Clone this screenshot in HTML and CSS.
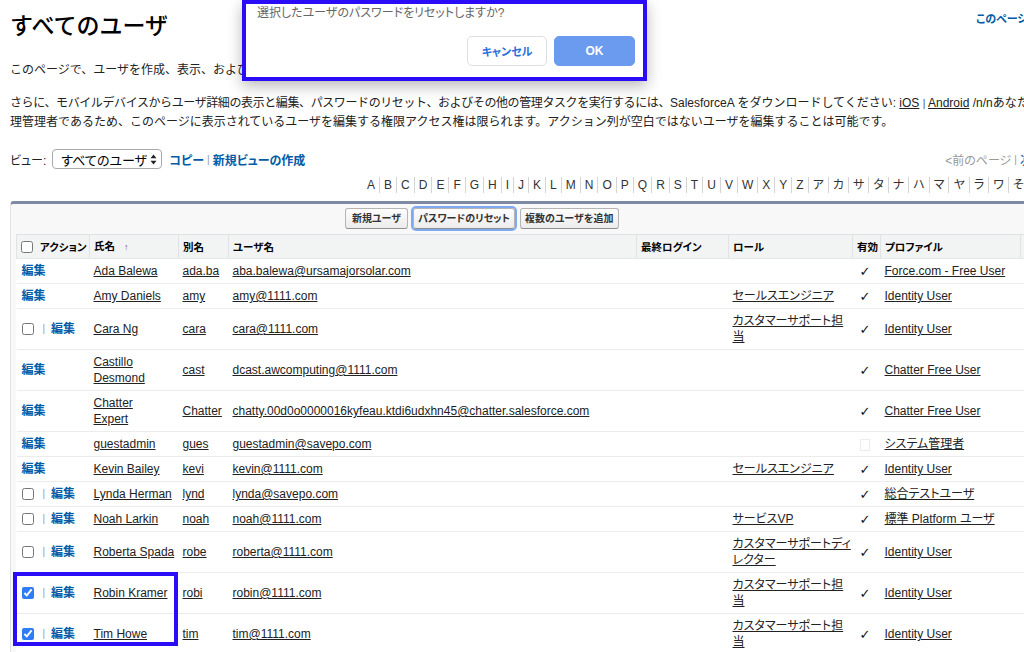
FILE: index.html
```html
<!DOCTYPE html>
<html lang="ja">
<head>
<meta charset="utf-8">
<title>すべてのユーザ</title>
<link rel="stylesheet" href="styles.css">
</head>
<body>
<div class="page">
  <div class="title-row">
    <h1 class="title">すべてのユーザ</h1>
    <a class="help" href="#">このページのヘルプ<span class="help-icon">?</span></a>
  </div>
  <p class="intro">このページで、ユーザを作成、表示、および管理できます。</p>
  <p class="desc"><span class="tight">さらに、モバイルデバイスからユーザ詳細の表示と編集、パスワードのリセット、およびその他の管理タスクを実行するには、</span>SalesforceA をダウンロードしてください: <a class="plain" href="#">iOS</a> <span class="bar dark">|</span> <a class="plain" href="#">Android</a> /n/nあなたは代<br>理管理者であるため、このページに表示されているユーザを編集する権限アクセス権は限られます。アクション列が空白ではないユーザを編集することは可能です。</p>

  <div class="view-row">
    <span class="view-label">ビュー:</span>
    <span class="select">すべてのユーザ<svg class="arrows" width="7" height="11" viewBox="0 0 7 11"><path d="M3.5 0.5 L6.5 4.2 L0.5 4.2 Z M3.5 10.5 L6.5 6.8 L0.5 6.8 Z" fill="#222"/></svg></span>
    <a class="action-link" href="#">コピー</a><span class="bar">|</span><a class="action-link" href="#">新規ビューの作成</a>
    <span class="pager"><span class="disabled">&lt;前のページ</span><span class="bar">|</span><a class="next" href="#">次のページ&gt;</a></span>
  </div>

  <ul class="alpha">
    <li>A</li><li>B</li><li>C</li><li>D</li><li>E</li><li>F</li><li>G</li><li>H</li><li>I</li><li>J</li><li>K</li><li>L</li><li>M</li><li>N</li><li>O</li><li>P</li><li>Q</li><li>R</li><li>S</li><li>T</li><li>U</li><li>V</li><li>W</li><li>X</li><li>Y</li><li>Z</li><li>ア</li><li>カ</li><li>サ</li><li>タ</li><li>ナ</li><li>ハ</li><li>マ</li><li>ヤ</li><li>ラ</li><li>ワ</li><li>その他</li><li>すべて</li>
  </ul>

  <div class="list-box">
    <div class="btn-row">
      <button class="btn">新規ユーザ</button>
      <button class="btn focused">パスワードのリセット</button>
      <button class="btn">複数のユーザを追加</button>
    </div>
    <table class="users">
      <colgroup>
        <col class="c-act"><col class="c-name"><col class="c-alias"><col class="c-user"><col class="c-login"><col class="c-role"><col class="c-active"><col class="c-prof"><col class="c-extra">
      </colgroup>
      <thead>
        <tr>
          <th class="act"><span class="act-wrap"><input type="checkbox" class="cb hcb">アクション</span></th>
          <th>氏名<span class="sort">↑</span></th>
          <th>別名</th>
          <th>ユーザ名</th>
          <th>最終ログイン</th>
          <th>ロール</th>
          <th>有効</th>
          <th>プロファイル</th>
          <th></th>
        </tr>
      </thead>
      <tbody>
        <tr>
          <td class="act"><a class="edit" href="#">編集</a></td>
          <td><a href="#">Ada Balewa</a></td><td><a href="#">ada.ba</a></td><td><a href="#">aba.balewa@ursamajorsolar.com</a></td><td></td><td></td>
          <td class="active"><span class="chk">✓</span></td><td><a href="#">Force.com - Free User</a></td><td></td>
        </tr>
        <tr>
          <td class="act"><a class="edit" href="#">編集</a></td>
          <td><a href="#">Amy Daniels</a></td><td><a href="#">amy</a></td><td><a href="#">amy@1111.com</a></td><td></td><td><a href="#">セールスエンジニア</a></td>
          <td class="active"><span class="chk">✓</span></td><td><a href="#">Identity User</a></td><td></td>
        </tr>
        <tr>
          <td class="act"><span class="act-wrap"><input type="checkbox" class="cb"><span class="sep">|</span><a class="edit" href="#">編集</a></span></td>
          <td><a href="#">Cara Ng</a></td><td><a href="#">cara</a></td><td><a href="#">cara@1111.com</a></td><td></td><td><a href="#">カスタマーサポート担<br>当</a></td>
          <td class="active"><span class="chk">✓</span></td><td><a href="#">Identity User</a></td><td></td>
        </tr>
        <tr>
          <td class="act"><a class="edit" href="#">編集</a></td>
          <td><a href="#">Castillo<br>Desmond</a></td><td><a href="#">cast</a></td><td><a href="#">dcast.awcomputing@1111.com</a></td><td></td><td></td>
          <td class="active"><span class="chk">✓</span></td><td><a href="#">Chatter Free User</a></td><td></td>
        </tr>
        <tr>
          <td class="act"><a class="edit" href="#">編集</a></td>
          <td><a href="#">Chatter<br>Expert</a></td><td><a href="#">Chatter</a></td><td><a href="#">chatty.00d0o0000016kyfeau.ktdi6udxhn45@chatter.salesforce.com</a></td><td></td><td></td>
          <td class="active"><span class="chk">✓</span></td><td><a href="#">Chatter Free User</a></td><td></td>
        </tr>
        <tr>
          <td class="act"><a class="edit" href="#">編集</a></td>
          <td><a href="#">guestadmin</a></td><td><a href="#">gues</a></td><td><a href="#">guestadmin@savepo.com</a></td><td></td><td></td>
          <td class="active"><span class="chk empty"></span></td><td><a href="#">システム管理者</a></td><td></td>
        </tr>
        <tr>
          <td class="act"><a class="edit" href="#">編集</a></td>
          <td><a href="#">Kevin Bailey</a></td><td><a href="#">kevi</a></td><td><a href="#">kevin@1111.com</a></td><td></td><td><a href="#">セールスエンジニア</a></td>
          <td class="active"><span class="chk">✓</span></td><td><a href="#">Identity User</a></td><td></td>
        </tr>
        <tr>
          <td class="act"><span class="act-wrap"><input type="checkbox" class="cb"><span class="sep">|</span><a class="edit" href="#">編集</a></span></td>
          <td><a href="#">Lynda Herman</a></td><td><a href="#">lynd</a></td><td><a href="#">lynda@savepo.com</a></td><td></td><td></td>
          <td class="active"><span class="chk">✓</span></td><td><a href="#">総合テストユーザ</a></td><td></td>
        </tr>
        <tr>
          <td class="act"><span class="act-wrap"><input type="checkbox" class="cb"><span class="sep">|</span><a class="edit" href="#">編集</a></span></td>
          <td><a href="#">Noah Larkin</a></td><td><a href="#">noah</a></td><td><a href="#">noah@1111.com</a></td><td></td><td><a href="#">サービスVP</a></td>
          <td class="active"><span class="chk">✓</span></td><td><a href="#">標準 Platform ユーザ</a></td><td></td>
        </tr>
        <tr>
          <td class="act"><span class="act-wrap"><input type="checkbox" class="cb"><span class="sep">|</span><a class="edit" href="#">編集</a></span></td>
          <td><a href="#">Roberta Spada</a></td><td><a href="#">robe</a></td><td><a href="#">roberta@1111.com</a></td><td></td><td><a href="#">カスタマーサポートディ<br>レクター</a></td>
          <td class="active"><span class="chk">✓</span></td><td><a href="#">Identity User</a></td><td></td>
        </tr>
        <tr>
          <td class="act"><span class="act-wrap"><input type="checkbox" class="cb" checked><span class="sep">|</span><a class="edit" href="#">編集</a></span></td>
          <td><a href="#">Robin Kramer</a></td><td><a href="#">robi</a></td><td><a href="#">robin@1111.com</a></td><td></td><td><a href="#">カスタマーサポート担<br>当</a></td>
          <td class="active"><span class="chk">✓</span></td><td><a href="#">Identity User</a></td><td></td>
        </tr>
        <tr>
          <td class="act"><span class="act-wrap"><input type="checkbox" class="cb" checked><span class="sep">|</span><a class="edit" href="#">編集</a></span></td>
          <td><a href="#">Tim Howe</a></td><td><a href="#">tim</a></td><td><a href="#">tim@1111.com</a></td><td></td><td><a href="#">カスタマーサポート担<br>当</a></td>
          <td class="active"><span class="chk">✓</span></td><td><a href="#">Identity User</a></td><td></td>
        </tr>
      </tbody>
    </table>
  </div>
</div>

<div class="highlight"></div>

<div class="dialog">
  <div class="dialog-text">選択したユーザのパスワードをリセットしますか?</div>
  <div class="dialog-buttons">
    <button class="dbtn cancel">キャンセル</button>
    <button class="dbtn ok">OK</button>
  </div>
</div>
</body>
</html>
```

FILE: styles.css
```css
html, body {
  margin: 0;
  padding: 0;
  overflow: hidden;
  background: #fff;
}
body {
  font-family: "Liberation Sans", "Noto Sans CJK JP", sans-serif;
  color: #222;
  font-size: 12px;
  position: relative;
  height: 652px;
}
a { color: inherit; }

.page {
  width: 1076px;
  padding: 13px 10px 0;
}

.title-row {
  display: flex;
  justify-content: space-between;
  align-items: flex-start;
}
.title {
  margin: 0;
  font-size: 23px;
  line-height: 26px;
  font-weight: 500;
  color: #000;
}
.help {
  width: 110px;
  display: flex;
  align-items: center;
  gap: 4px;
  font-size: 11px;
  line-height: 13px;
  font-weight: 700;
  color: #015ba7;
  text-decoration: none;
  white-space: nowrap;
  font-feature-settings: "palt";
}
.help-icon {
  display: inline-block;
  flex: none;
  width: 12px;
  height: 12px;
  border-radius: 50%;
  background: #f09a1d;
  color: #fff;
  font-size: 9px;
  line-height: 12px;
  text-align: center;
}

.intro {
  margin: 23px 0 0;
  line-height: 16px;
  white-space: nowrap;
}
.desc {
  margin: 16px 0 0;
  line-height: 19px;
  white-space: nowrap;
}
.tight { letter-spacing: -0.4px; }
.plain { color: #222; text-decoration: underline; }
.bar {
  color: #999;
  font-size: 10px;
  margin: 0 3px;
}
.bar.dark { color: #444; margin: 0; }

.view-row {
  margin-top: 17px;
  height: 20px;
  display: flex;
  align-items: center;
  font-feature-settings: "palt";
}
.view-label { margin-right: 6px; }
.select {
  display: inline-flex;
  align-items: center;
  justify-content: space-between;
  box-sizing: border-box;
  width: 110px;
  height: 20px;
  padding: 0 4px 0 8px;
  border: 1px solid #a9a9a9;
  border-radius: 4px;
  background: #fff;
  font-size: 13px;
  color: #000;
  margin-right: 7px;
}
.action-link {
  color: #015ba7;
  font-weight: 700;
  text-decoration: none;
}
.pager {
  margin-left: auto;
  display: flex;
  align-items: center;
  color: #999;
}
.pager .next { color: #015ba7; text-decoration: none; }

.alpha {
  list-style: none;
  margin: 8px 0 0 353px;
  padding: 0;
  display: flex;
  line-height: 16px;
  font-size: 12px;
  color: #333;
  font-feature-settings: "palt";
  white-space: nowrap;
}
.alpha li {
  padding: 0 4px;
  border-left: 1px solid #d4d4d4;
}
.alpha li:first-child { border-left: 0; }

.list-box {
  margin-top: 8px;
  width: 1140px;
  background: #f8f8f8;
  border: 1px solid #e0e3e5;
  border-top: 3px solid #7e89a4;
  border-radius: 4px 4px 0 0;
  padding: 4px 5px 0;
}
.btn-row {
  display: flex;
  gap: 5px;
  padding-left: 329px;
  height: 21px;
}
.btn {
  box-sizing: border-box;
  height: 21px;
  padding: 0 4px;
  border: 1px solid #b5b5b5;
  border-bottom-color: #8f8f8f;
  border-radius: 3px;
  background: linear-gradient(#fdfdfd, #ececec);
  font-family: inherit;
  font-size: 10px;
  font-weight: 700;
  color: #333;
  line-height: 15px;
  font-feature-settings: "palt";
}
.btn:first-child { padding: 0 6px; }
.btn.focused {
  box-shadow: 0 0 0 2px #7ea8ef;
}

.users {
  margin-top: 5px;
  border-collapse: collapse;
  table-layout: fixed;
  width: 1124px;
  background: #fff;
  font-size: 12px;
  font-feature-settings: "palt";
}
.c-act { width: 73px; }
.c-name { width: 89px; }
.c-alias { width: 50px; }
.c-user { width: 408px; }
.c-login { width: 92px; }
.c-role { width: 124px; }
.c-active { width: 28px; }
.c-prof { width: 140px; }
.c-extra { width: 120px; }

.users th {
  background: #f2f3f3;
  border: 1px solid #e0e3e5;
  border-bottom-color: #e6e6e6;
  text-align: left;
  font-size: 10.5px;
  font-weight: 700;
  color: #000;
  line-height: 15px;
  padding: 4px 4px 3px 4px;
  white-space: nowrap;
  overflow: hidden;
}
.sort {
  font-size: 9px;
  color: #666;
  margin-left: 9px;
  font-weight: 400;
}
.users td {
  padding: 4px 4px 4px 4px;
  line-height: 16px;
  border-bottom: 1px solid #ececec;
  vertical-align: middle;
  white-space: nowrap;
}
.users td a { color: #222; text-decoration: underline; }
.users td.act { padding-left: 5px; }
.users td a.edit {
  color: #015ba7;
  font-weight: 700;
  text-decoration: none;
}
.act-wrap {
  display: flex;
  align-items: center;
  height: 16px;
}
.cb {
  flex: none;
  width: 12px;
  height: 12px;
  margin: 0 9px 0 0;
  accent-color: #2f7cf6;
}
.hcb { margin-right: 7px; }
.sep {
  color: #999;
  font-size: 10px;
  line-height: 16px;
  margin-right: 6px;
}
.users td.active { padding-left: 7px; }
.chk {
  display: inline-block;
  width: 10px;
  height: 14px;
  font-family: "DejaVu Sans", sans-serif;
  font-size: 13px;
  line-height: 14px;
  color: #111;
  vertical-align: middle;
}
.chk.empty {
  box-sizing: border-box;
  width: 10px;
  height: 12px;
  border: 1px solid #ececec;
}

.highlight {
  position: absolute;
  left: 13px;
  top: 572px;
  width: 165px;
  height: 74px;
  box-sizing: border-box;
  border: 4px solid #2b0cf7;
}

.dialog {
  position: absolute;
  left: 242px;
  top: 0;
  width: 405px;
  height: 81px;
  box-sizing: border-box;
  border: 4px solid #2b0cf7;
  background: #fff;
  box-shadow: 0 5px 14px rgba(0, 0, 0, 0.28);
  padding: 2px 8px 0 11px;
  font-feature-settings: "palt";
}
.dialog-text {
  font-size: 12px;
  line-height: 14px;
  color: #666;
}
.dialog-buttons {
  margin-top: 16px;
  display: flex;
  justify-content: flex-end;
  gap: 7px;
}
.dbtn {
  box-sizing: border-box;
  height: 30px;
  border-radius: 5px;
  font-family: inherit;
  font-size: 11px;
  font-weight: 700;
  font-feature-settings: "palt";
}
.dbtn.cancel {
  width: 80px;
  background: #fff;
  border: 1px solid #dedede;
  color: #2a6fdb;
}
.dbtn.ok {
  width: 81px;
  background: #6a9bee;
  border: 1px solid #6a9bee;
  color: #fff;
  font-size: 12px;
}
```
